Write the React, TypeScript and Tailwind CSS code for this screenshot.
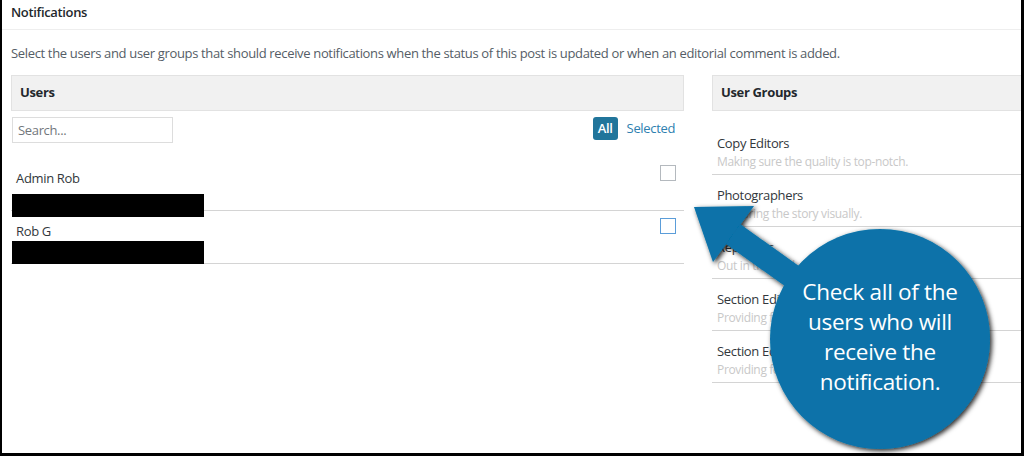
import React from 'react'

const users = [
    { name: 'Admin Rob', focus: false, boxTop: 'mt-[6px]', boxMb: '-mb-[5px]' },
    { name: 'Rob G', focus: true, boxTop: 'mt-0', boxMb: '-mb-[1px]' },
]

const groups = [
    { name: 'Copy Editors', desc: 'Making sure the quality is top-notch.' },
    { name: 'Photographers', desc: 'Capturing the story visually.' },
    { name: 'Reporters', desc: 'Out in the field, writing stories.' },
    { name: 'Section Editors', desc: 'Providing feedback and direction.' },
    { name: 'Section Editors', desc: 'Providing feedback and direction.' },
]

function Callout() {
    return (
        <div className="absolute inset-0 pointer-events-none">
            <svg width="1024" height="456" viewBox="0 0 1024 456" className="absolute left-0 top-0">
                <defs>
                    <filter id="shade" x="-20%" y="-20%" width="140%" height="140%">
                        <feDropShadow dx="2" dy="2" stdDeviation="2.5" floodColor="#000" floodOpacity="0.85" />
                    </filter>
                </defs>
                <g filter="url(#shade)" fill="#0872a9">
                    <polygon points="692,207 752,206 711,262" />
                    <polygon points="738,224 885,329 871,349 724,244" />
                    <circle cx="878" cy="339" r="110" />
                </g>
            </svg>
            <div className="absolute left-[768px] top-[277px] w-[220px] text-center text-white text-[22.5px] leading-[30px] tracking-[-0.3px] font-['Open_Sans',sans-serif]">
                Check all of the<br />users who will<br />receive the<br />notification.
            </div>
        </div>
    )
}

export default function App() {
    return (
        <div className="relative w-[1024px] h-[456px] overflow-hidden bg-white border-l-2 border-r-[3px] border-b-[3px] border-black font-['Open_Sans',sans-serif] text-[13px] tracking-[-0.34px]">
            <div className="h-[30px] border-b border-[#eeeeee] pl-[9px] pt-[3px]">
                <h2 className="font-semibold text-[#23282d] text-[13px] leading-[18px]">Notifications</h2>
            </div>
            <p className="pl-[9px] mt-[14px] text-[#555d66] leading-[18px]">
                Select the users and user groups that should receive notifications when the status of this post is updated or when an editorial comment is added.
            </p>
            <div className="flex pl-[9px] mt-[13px] gap-[28px]">
                <div className="w-[673px] shrink-0">
                    <div className="h-[36px] bg-[#f1f1f1] border border-[#e2e2e2] flex items-center pl-[8px]">
                        <span className="font-bold text-[#23282d]">Users</span>
                    </div>
                    <div className="flex items-start justify-between mt-[6px] pl-[1px] pr-[9px]">
                        <input
                            type="text"
                            placeholder="Search..."
                            className="w-[161px] h-[26px] border border-[#dddddd] px-[5px] text-[13px] text-[#32373c] placeholder:text-[#72777c] outline-none"
                        />
                        <div className="flex items-center gap-[9px]">
                            <span className="h-[23px] px-[5px] rounded-[3px] bg-[#21759b] text-white font-semibold flex items-center">All</span>
                            <span className="text-[#2e7fb0]">Selected</span>
                        </div>
                    </div>
                    <div className="mt-[15px]">
                        {users.map((u, i) => (
                            <div key={i} className="relative h-[53px] border-b border-[#d4d4d4] pt-[10px]">
                                <div className="pl-[5px] text-[#32373c] leading-[20px]">{u.name}</div>
                                <div className={`relative ml-[1px] w-[192px] h-[23px] ${u.boxTop} ${u.boxMb} bg-black`} />
                                <span
                                    className={`absolute right-[8px] top-[7px] w-[16px] h-[16px] border bg-white ${u.focus ? 'border-[#5b9dd9]' : 'border-[#b4b9be]'}`}
                                />
                            </div>
                        ))}
                    </div>
                </div>
                <div className="w-[340px] shrink-0">
                    <div className="h-[36px] bg-[#f1f1f1] border border-[#e2e2e2] flex items-center pl-[8px]">
                        <span className="font-bold text-[#23282d]">User Groups</span>
                    </div>
                    <div className="mt-[12px]">
                        {groups.map((g, i) => (
                            <div key={i} className="h-[52px] border-b border-[#d4d4d4] pl-[5px] pt-[10px]">
                                <div className="text-[#32373c] leading-[20px]">{g.name}</div>
                                <div className="text-[#c8c8c8] text-[12px] leading-[16px] mt-[1px]">{g.desc}</div>
                            </div>
                        ))}
                    </div>
                </div>
            </div>
            <Callout />
        </div>
    )
}
